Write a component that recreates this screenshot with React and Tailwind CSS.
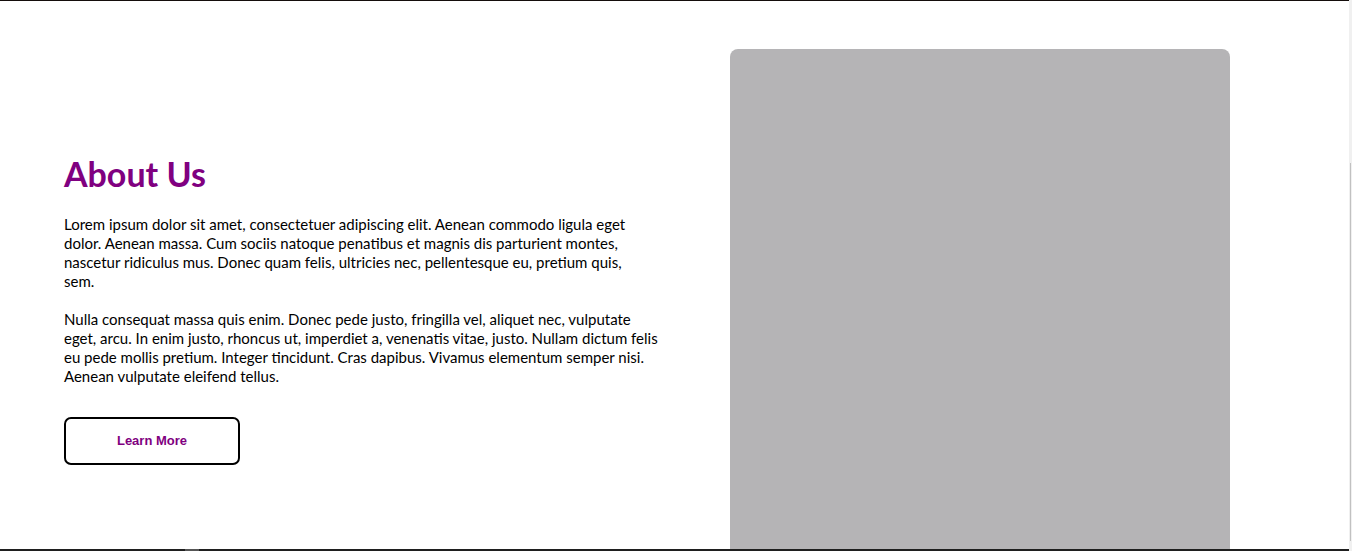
export default function App() {
  return (
    <div className="flex w-[1352px] h-[551px] overflow-hidden bg-white" style={{ fontFamily: "Lato, 'Open Sans', sans-serif" }}>
      <div className="flex flex-col flex-1 min-w-0">
        <div className="h-px bg-[#140d0b]" />
        <main className="flex flex-1 min-h-0 overflow-hidden pl-[64px] pt-[48px]">
          <div className="w-[597px] shrink-0 pt-[104px]">
            <h2 className="text-[34px] leading-[42px] font-bold text-[#800080]">About Us</h2>
            <p className="mt-[20px] text-[15px] leading-[19px] text-black">
              Lorem ipsum dolor sit amet, consectetuer adipiscing elit. Aenean commodo ligula eget dolor. Aenean massa. Cum sociis natoque penatibus et magnis dis parturient montes, nascetur ridiculus mus. Donec quam felis, ultricies nec, pellentesque eu, pretium quis,<br />sem.
            </p>
            <p className="mt-[19px] text-[15px] leading-[19px] text-black">
              Nulla consequat massa quis enim. Donec pede justo, fringilla vel, aliquet nec, vulputate eget, arcu. In enim justo, rhoncus ut, imperdiet a, venenatis vitae, justo. Nullam dictum felis eu pede mollis pretium. Integer tincidunt. Cras dapibus. Vivamus elementum semper nisi. Aenean vulputate eleifend tellus.
            </p>
            <button className="mt-[31px] w-[176px] h-[48px] border-2 border-black rounded-[7px] bg-white text-[13px] font-bold text-[#800080]" style={{ fontFamily: "'Liberation Sans', Arial, sans-serif" }}>
              Learn More
            </button>
          </div>
          <div className="ml-[69px] w-[500px] h-[520px] shrink-0 rounded-[8px] bg-[#b5b4b6]" />
        </main>
        <div className="flex h-[2px] bg-[#1f1f1f]">
          <div className="ml-[185px] w-[14px] bg-[#555]" />
        </div>
      </div>
      <div className="flex flex-col w-[3px] bg-[#f0f0f0]">
        <div className="mt-[163px] ml-[1px] w-[1px] h-[378px] bg-[#c1c1c1]" />
      </div>
    </div>
  );
}
